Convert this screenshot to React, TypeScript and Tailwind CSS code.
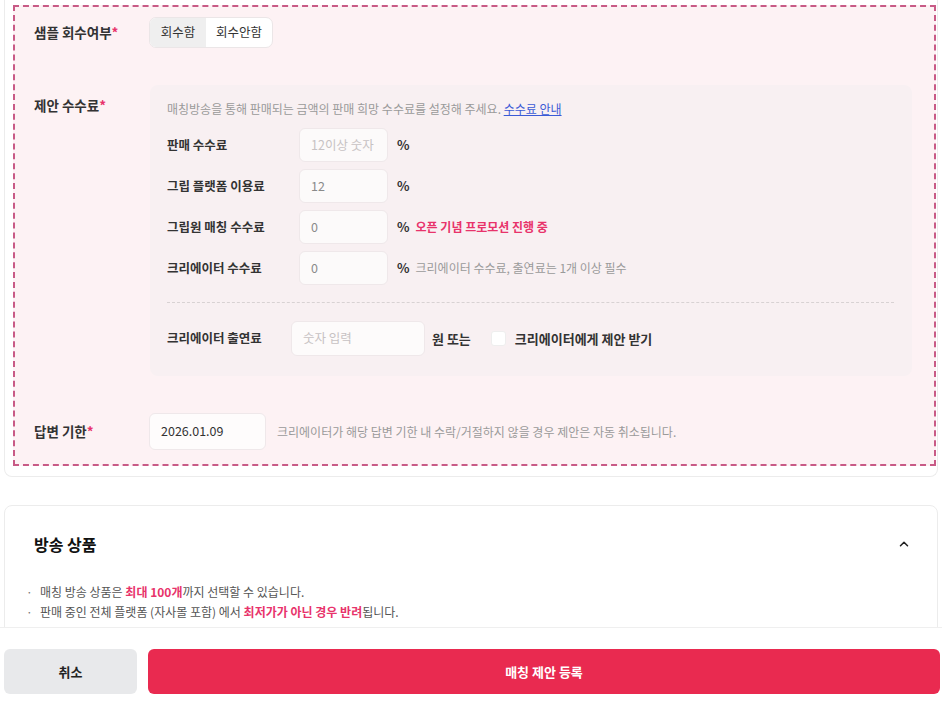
import React from "react";

const font = { fontFamily: '"Noto Sans CJK KR", "Noto Sans", sans-serif' };

function Req() {
  return <span className="text-[#e8336b]">*</span>;
}

function FeeRow({
  label,
  value,
  placeholder,
  note,
}: {
  label: string;
  value?: string;
  placeholder?: string;
  note?: React.ReactNode;
}) {
  return (
    <div className="flex items-center h-[34px]">
      <div className="w-[132px] text-[12.5px] font-bold text-[#333]">{label}</div>
      <div className="w-[89px] h-[34px] rounded-[6px] border border-[#efe8ea] bg-[#fcfafa] flex items-center px-[11px] text-[12.5px]">
        {value ? (
          <span className="text-[#8a8a8a]">{value}</span>
        ) : (
          <span className="text-[#c7c2c3]">{placeholder}</span>
        )}
      </div>
      <span className="ml-[9px] text-[13px] font-bold text-[#333]">%</span>
      {note}
    </div>
  );
}

export default function App() {
  return (
    <div
      className="w-[942px] h-[705px] overflow-hidden bg-white flex flex-col relative"
      style={font}
    >
      <div className="flex-1 overflow-hidden">
        {/* card 1 */}
        <div className="ml-[4px] w-[934px] rounded-b-[8px] border border-t-0 border-[#ececec] bg-white pl-[8px] pr-px pt-[5px] pb-[10px]">
          <div className="border-2 border-dashed border-[#c85a86] bg-[#fdf2f4] pl-[19px] pr-[22px] pt-[10px] pb-[14px]">
            {/* row 1 */}
            <div className="flex items-center">
              <div className="w-[115px] text-[13.5px] font-bold text-[#333]">
                샘플 회수여부<Req />
              </div>
              <div className="flex h-[31px] rounded-[7px] border border-[#ebe6e7] bg-white overflow-hidden text-[12.5px] text-[#333]">
                <div className="w-[56px] bg-[#efefef] flex items-center justify-center">회수함</div>
                <div className="w-[66px] flex items-center justify-center">회수안함</div>
              </div>
            </div>

            {/* row 2 */}
            <div className="flex mt-[37px]">
              <div className="w-[116px] pt-[10px] text-[13.5px] font-bold text-[#333]">
                제안 수수료<Req />
              </div>
              <div className="flex-1 rounded-[8px] bg-[#f8f0f2] pl-[17px] pr-[18px] pt-[15px] pb-[20px]">
                <div className="text-[12px] text-[#9a9a9a] leading-[18px]">
                  매칭방송을 통해 판매되는 금액의 판매 희망 수수료를 설정해 주세요.{" "}
                  <span className="text-[#3b5bd6] underline">수수료 안내</span>
                </div>
                <div className="flex flex-col gap-[7px] mt-[10px]">
                  <FeeRow label="판매 수수료" placeholder="12이상 숫자" />
                  <FeeRow label="그립 플랫폼 이용료" value="12" />
                  <FeeRow
                    label="그립원 매칭 수수료"
                    value="0"
                    note={
                      <span className="ml-[6px] text-[12px] font-semibold text-[#e8336b]">
                        오픈 기념 프로모션 진행 중
                      </span>
                    }
                  />
                  <FeeRow
                    label="크리에이터 수수료"
                    value="0"
                    note={
                      <span className="ml-[6px] text-[12px] text-[#9a9a9a]">
                        크리에이터 수수료, 출연료는 1개 이상 필수
                      </span>
                    }
                  />
                </div>
                <div className="border-t border-dashed border-[#d8d2d3] mt-[17px]" />
                <div className="flex items-center mt-[18px] h-[35px]">
                  <div className="w-[124px] text-[12.5px] font-bold text-[#333]">크리에이터 출연료</div>
                  <div className="w-[134px] h-[35px] rounded-[6px] border border-[#efe8ea] bg-[#fdfbfb] flex items-center px-[11px] text-[12.5px] text-[#c7c2c3]">
                    숫자 입력
                  </div>
                  <span className="ml-[7px] text-[13px] font-bold text-[#333]">원 또는</span>
                  <div className="ml-[20px] w-[15px] h-[15px] rounded-[3px] border border-[#eee] bg-white" />
                  <span className="ml-[9px] text-[13px] font-bold text-[#333]">크리에이터에게 제안 받기</span>
                </div>
              </div>
            </div>

            {/* row 3 */}
            <div className="flex items-center mt-[37px]">
              <div className="w-[115px] text-[13.5px] font-bold text-[#333]">
                답변 기한<Req />
              </div>
              <div className="w-[117px] h-[37px] rounded-[6px] border border-[#efe8ea] bg-[#fefcfc] flex items-center px-[11px] text-[12.5px] text-[#333]">
                2026.01.09
              </div>
              <span className="ml-[11px] text-[12px] text-[#9a9a9a]">
                크리에이터가 해당 답변 기한 내 수락/거절하지 않을 경우 제안은 자동 취소됩니다.
              </span>
            </div>
          </div>
        </div>

        {/* card 2 */}
        <div className="ml-[4px] w-[934px] mt-[28px] rounded-[8px] border border-[#ececec] bg-white pl-[21px] pr-[26px] pt-[26px] pb-[40px]">
          <div className="flex items-center justify-between pl-[8px]">
            <div className="text-[16px] font-bold text-[#111]">방송 상품</div>
            <svg width="14" height="14" viewBox="0 0 24 24" fill="none" stroke="#222" strokeWidth="2.6" strokeLinecap="round" strokeLinejoin="round">
              <path d="M6 15l6-6 6 6" />
            </svg>
          </div>
          <div className="mt-[26px] text-[12px] text-[#555] leading-[20px]">
            <div className="flex">
              <span className="w-[14px] text-[#777]">·</span>
              <span>
                매칭 방송 상품은 <span className="font-semibold text-[#e8336b]">최대 100개</span>까지 선택할 수 있습니다.
              </span>
            </div>
            <div className="flex">
              <span className="w-[14px] text-[#777]">·</span>
              <span>
                판매 중인 전체 플랫폼 (자사몰 포함) 에서{" "}
                <span className="font-semibold text-[#e8336b]">최저가가 아닌 경우 반려</span>됩니다.
              </span>
            </div>
          </div>
        </div>
      </div>

      {/* footer */}
      <div className="absolute left-0 right-0 bottom-0 h-[78px] bg-white border-t border-[#efefef] flex pl-[4px] pr-[2px] pt-[21px] gap-[11px]">
        <button className="w-[133px] h-[45px] rounded-[6px] bg-[#e8e9eb] text-[13px] font-bold text-[#222]">
          취소
        </button>
        <button className="flex-1 h-[45px] rounded-[6px] bg-[#e92a50] text-[13px] font-bold text-white">
          매칭 제안 등록
        </button>
      </div>
    </div>
  );
}
